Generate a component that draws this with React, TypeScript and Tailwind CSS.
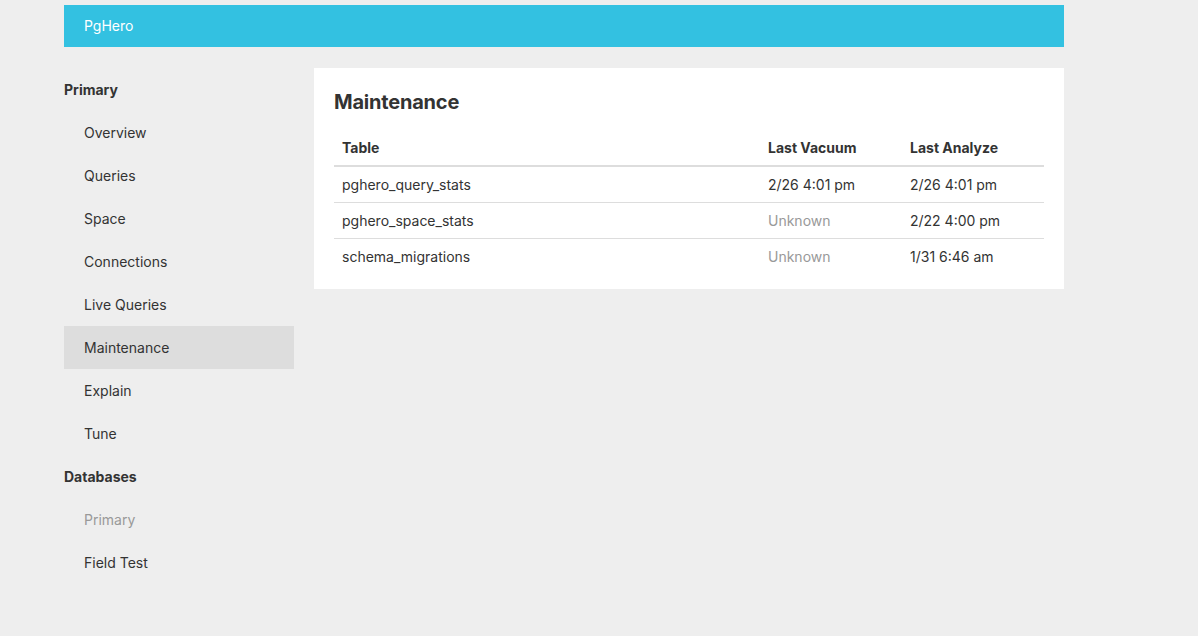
export default function App() {
  const nav = ["Overview", "Queries", "Space", "Connections", "Live Queries", "Maintenance", "Explain", "Tune"]
  const rows = [
    { table: "pghero_query_stats", vacuum: "2/26 4:01 pm", analyze: "2/26 4:01 pm" },
    { table: "pghero_space_stats", vacuum: null, analyze: "2/22 4:00 pm" },
    { table: "schema_migrations", vacuum: null, analyze: "1/31 6:46 am" },
  ]

  return (
    <div className="min-h-[636px] bg-[#eeeeee] text-[#333] text-sm font-['Inter','Open_Sans',sans-serif] pt-[5px]">
      <div className="w-[1000px] ml-16">
        <div className="h-[42px] bg-[#33c1e1] flex items-center px-5 text-white">PgHero</div>

        <div className="flex gap-5 mt-[21px]">
          <div className="w-[230px] shrink-0">
            <div className="h-[43px] flex items-center font-bold">Primary</div>
            {nav.map(item => (
              <div
                key={item}
                className={`h-[43px] flex items-center pl-5 ${item === "Maintenance" ? "bg-[#dddddd]" : ""}`}
              >
                {item}
              </div>
            ))}
            <div className="h-[43px] flex items-center font-bold">Databases</div>
            <div className="h-[43px] flex items-center pl-5 text-[#999]">Primary</div>
            <div className="h-[43px] flex items-center pl-5">Field Test</div>
          </div>

          <div className="flex-1 self-start bg-white px-5 pt-5 pb-[14px]">
            <h1 className="text-xl font-bold leading-7 tracking-[-0.2px]">Maintenance</h1>
            <div className="mt-[14px]">
              <div className="grid grid-cols-[1fr_142px_142px] h-[37px] items-center border-b-2 border-[#dddddd] font-bold">
                <div className="px-2">Table</div>
                <div className="px-2">Last Vacuum</div>
                <div className="px-2">Last Analyze</div>
              </div>
              {rows.map((r, i) => (
                <div
                  key={r.table}
                  className={`grid grid-cols-[1fr_142px_142px] h-9 items-center ${i < rows.length - 1 ? "border-b border-[#dddddd]" : ""}`}
                >
                  <div className="px-2">{r.table}</div>
                  <div className={`px-2 ${r.vacuum ? "" : "text-[#999]"}`}>{r.vacuum ?? "Unknown"}</div>
                  <div className="px-2">{r.analyze}</div>
                </div>
              ))}
            </div>
          </div>
        </div>
      </div>
    </div>
  )
}
